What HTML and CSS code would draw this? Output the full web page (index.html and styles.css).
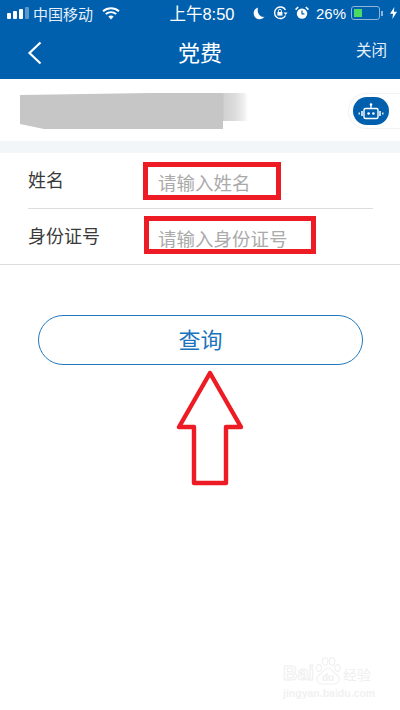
FILE: index.html
```html
<!DOCTYPE html>
<html lang="zh-CN">
<head>
  <meta charset="UTF-8" />
  <meta name="viewport" content="width=device-width, initial-scale=1.0"/>
  <title>党费</title>
  <link rel="stylesheet" href="styles.css">
</head>
<body>

  <div class="phone">

    <!-- Status bar -->
    <div class="status">
      <div class="status-left">
        <div class="signal"><i></i><i></i><i></i><i class="off"></i></div>
        <span class="carrier">中国移动</span>
        <svg class="wifi" width="18" height="13" viewBox="0 0 18 13">
          <path d="M1 4.2 C5.6 0.2 12.4 0.2 17 4.2" fill="none" stroke="#fff" stroke-width="2"/>
          <path d="M3.8 7 C6.9 4.5 11.1 4.5 14.2 7" fill="none" stroke="#fff" stroke-width="2"/>
          <path d="M6.3 9.4 L9 12.6 L11.7 9.4 C10.1 8.2 7.9 8.2 6.3 9.4 Z" fill="#fff"/>
        </svg>
      </div>
      <span class="time">上午8:50</span>
      <div class="status-right">
        <svg width="12" height="13" viewBox="0 0 12 13">
          <path d="M5 0.5 C2 1.5 0.5 4 0.7 6.8 C1 10 3.6 12.3 6.6 12.3 C8.6 12.3 10.3 11.4 11.5 9.8 C7.5 10.6 3.6 6.5 5 0.5 Z" fill="#fff"/>
        </svg>
        <svg class="lock" width="15" height="14" viewBox="0 0 15 14">
          <path d="M12.5 9.5 A5.8 5.8 0 1 1 12.5 4" fill="none" stroke="#fff" stroke-width="1.4"/>
          <path d="M10.6 6.4 L14.6 6.4 L12.6 9 Z" fill="#fff"/>
          <rect x="4.4" y="6" width="5" height="3.6" fill="#fff"/>
          <path d="M5.4 6 V4.8 A1.5 1.5 0 0 1 8.4 4.8 V6" fill="none" stroke="#fff" stroke-width="1"/>
        </svg>
        <svg class="alarm" width="14" height="14" viewBox="0 0 14 14">
          <circle cx="7" cy="7.6" r="5.2" fill="#fff"/>
          <path d="M7 4.6 V7.8 H9.4" fill="none" stroke="#0060ae" stroke-width="1.2"/>
          <path d="M0.6 3.6 L3.2 1 M13.4 3.6 L10.8 1" stroke="#fff" stroke-width="1.6"/>
        </svg>
        <span class="battery-text">26%</span>
        <div class="battery"><div class="battery-level"></div></div>
        <div class="battery-cap"></div>
        <svg class="bolt" width="7" height="12" viewBox="0 0 7 12">
          <path d="M4.4 0 L0 6.8 H3 L2.4 12 L7 4.8 H3.8 Z" fill="#fff"/>
        </svg>
      </div>
    </div>

    <!-- Title bar -->
    <div class="titlebar">
      <svg class="back" width="15" height="24" viewBox="0 0 15 24">
        <path d="M13.5 1.5 L2.5 12 L13.5 22.5" fill="none" stroke="#fff" stroke-width="2.2"/>
      </svg>
      <span class="title">党费</span>
      <span class="close">关闭</span>
    </div>

    <!-- Masked user row -->
    <div class="user-row">
      <div class="mask"></div>
      <div class="robot-pill">
        <div class="robot">
          <svg width="26" height="17" viewBox="0 0 26 17">
            <path d="M13 1 V5" stroke="#fff" stroke-width="1.3"/>
            <circle cx="13" cy="1.6" r="1.3" fill="#fff"/>
            <rect x="6" y="5.5" width="14" height="10" rx="1.5" fill="none" stroke="#fff" stroke-width="1.4"/>
            <circle cx="10.6" cy="10.5" r="1.3" fill="#fff"/>
            <circle cx="15.4" cy="10.5" r="1.3" fill="#fff"/>
            <path d="M4 8 V13 M22 8 V13" stroke="#fff" stroke-width="1.5"/>
            <path d="M1.2 9.5 V11.5 M24.8 9.5 V11.5" stroke="#fff" stroke-width="1.3"/>
          </svg>
        </div>
      </div>
    </div>

    <div class="band"></div>

    <!-- Form -->
    <div class="form">
      <div class="form-row">
        <span class="label">姓名</span>
        <span class="placeholder">请输入姓名</span>
      </div>
      <div class="form-row second">
        <span class="label">身份证号</span>
        <span class="placeholder">请输入身份证号</span>
      </div>
    </div>

    <button class="query">查询</button>

    <!-- Red annotations drawn over the screenshot -->
    <div class="mark mark-name"></div>
    <div class="mark mark-id"></div>
    <svg class="arrow" width="68" height="120" viewBox="0 0 68 120">
      <path d="M34 7 L3 61 H18 V117 H50 V61 H65 Z" fill="none" stroke="#ed1c24" stroke-width="4.4" stroke-linejoin="round"/>
    </svg>

    <div class="watermark">
      <div class="wm-brand">
        <span class="wm-bai">Bai</span>
        <svg class="wm-paw" width="28" height="28" viewBox="0 0 28 28">
          <g fill="#fff" stroke="#f1f1f1" stroke-width="1.2">
            <ellipse cx="5" cy="11" rx="2.6" ry="3.4"/>
            <ellipse cx="11" cy="4.5" rx="2.8" ry="3.8"/>
            <ellipse cx="18" cy="4.5" rx="2.8" ry="3.8"/>
            <ellipse cx="23.5" cy="11" rx="2.6" ry="3.4"/>
            <path d="M14 11 C10 11 9 16 5 18 C1 21 3 27 8 27 H20 C25 27 27 21 23 18 C19 16 18 11 14 11 Z"/>
          </g>
          <text x="14" y="24" text-anchor="middle" class="wm-du">du</text>
        </svg>
        <span class="wm-jy">经验</span>
      </div>
      <div class="wm-url">jingyan.baidu.com</div>
    </div>

  </div>

</body>
</html>
```

FILE: styles.css
```css
* {
  box-sizing: border-box;
  margin: 0;
  padding: 0;
  font-family: 'Liberation Sans', 'Noto Sans CJK SC', sans-serif;
}

body {
  background: #fff;
}

.phone {
  position: relative;
  width: 400px;
  height: 710px;
  overflow: hidden;
  background: #fff;
}

/* Status bar */
.status {
  display: flex;
  align-items: center;
  justify-content: space-between;
  height: 26px;
  padding: 0 3px 0 7px;
  background: #0060ae;
  color: #fff;
}

.status-left,
.status-right {
  display: flex;
  align-items: center;
  width: 150px;
}

.status-right {
  justify-content: flex-end;
}

.signal {
  display: flex;
  align-items: flex-end;
  gap: 2px;
  height: 12px;
  margin-bottom: 1px;
}

.signal i {
  display: block;
  width: 4px;
  background: #fff;
  border-radius: 1px;
}

.signal i:nth-child(1) { height: 6px; }
.signal i:nth-child(2) { height: 8px; }
.signal i:nth-child(3) { height: 10px; }
.signal i:nth-child(4) { height: 12px; }

.signal i.off {
  background: #5d97c9;
}

.carrier {
  margin-left: 4px;
  font-size: 15px;
  color: #e6eff7;
}

.wifi {
  margin-left: 9px;
}

.time {
  font-size: 16.5px;
  white-space: nowrap;
}

.lock {
  margin-left: 8px;
}

.alarm {
  margin-left: 7px;
}

.battery-text {
  margin-left: 7px;
  font-size: 15px;
}

.battery {
  width: 29px;
  height: 14px;
  margin-left: 5px;
  padding: 2px;
  border: 1px solid #8fb6d9;
  border-radius: 3px;
}

.battery-level {
  width: 8px;
  height: 100%;
  background: #4cd964;
}

.battery-cap {
  width: 2px;
  height: 5px;
  margin-left: 1px;
  background: #8fb6d9;
}

.bolt {
  margin-left: 7px;
}

/* Title bar */
.titlebar {
  display: flex;
  align-items: center;
  justify-content: space-between;
  height: 53px;
  padding: 0 13px 0 27px;
  background: #0060ae;
  color: #fff;
}

.title {
  margin: 0 0 4px 2px;
  font-size: 22px;
}

.close {
  margin-bottom: 8px;
  font-size: 15.5px;
  color: #e6eff7;
}

/* Masked user row */
.user-row {
  display: flex;
  align-items: center;
  justify-content: space-between;
  height: 62px;
  padding: 2px 0 0 20px;
}

.mask {
  width: 228px;
  height: 36px;
  background: linear-gradient(90deg, #c6c6c6 0, #c6c6c6 203px, #d2d2d2 204px, #dcdcdc 215px, #f0f0f0 224px, #fff 228px);
  clip-path: polygon(0 2px, 130px 0, 228px 0, 228px 28px, 203px 28px, 203px 36px, 24px 36px, 0 31px);
}

.robot-pill {
  width: 52px;
  height: 36px;
  padding: 3px 0 0 4px;
  border: 1px solid #f1f3f5;
  border-right: none;
  border-radius: 18px 0 0 18px;
}

.robot {
  display: flex;
  align-items: center;
  justify-content: center;
  width: 36px;
  height: 28px;
  background: #0060ae;
  border-radius: 14px;
}

.band {
  height: 12px;
  background: #f2f6f9;
}

/* Form */
.form {
  border-bottom: 1px solid #ddd;
}

.form-row {
  display: flex;
  align-items: center;
  height: 56px;
  margin: 0 27px 0 28px;
  border-bottom: 1px solid #ddd;
}

.form-row.second {
  height: 55px;
  border-bottom: none;
}

.label {
  width: 130px;
  margin-bottom: 3px;
  font-size: 18px;
  color: #3a3a3a;
}

.placeholder {
  margin-top: 2px;
  font-size: 18.5px;
  color: #aaa;
}

.query {
  display: block;
  width: 325px;
  height: 50px;
  margin: 50px 0 0 38px;
  padding-bottom: 5px;
  background: #fff;
  border: 1.5px solid #2277bd;
  border-radius: 25px;
  font-size: 22px;
  color: #1a73bb;
}

/* Red annotations */
.mark {
  position: absolute;
  height: 38px;
  border: 5px solid #ed1c24;
}

.mark-name {
  left: 143px;
  top: 162px;
  width: 138px;
}

.mark-id {
  left: 144px;
  top: 216px;
  width: 172px;
}

.arrow {
  position: absolute;
  left: 176px;
  top: 366px;
}

/* Baidu watermark */
.watermark {
  position: absolute;
  left: 283px;
  top: 657px;
  width: 90px;
  color: #fff;
}

.wm-brand {
  display: flex;
  align-items: flex-end;
  height: 28px;
}

.wm-bai {
  width: 34px;
  font-size: 20px;
  font-weight: bold;
  line-height: 24px;
  -webkit-text-stroke: 1px #efefef;
}

.wm-paw {
  margin-left: -3px;
}

.wm-du {
  font-size: 10px;
  font-weight: bold;
  fill: #efefef;
}

.wm-jy {
  margin-left: 1px;
  font-size: 14px;
  line-height: 20px;
  color: #efefef;
}

.wm-url {
  margin-top: 2px;
  font-size: 10.5px;
  font-weight: bold;
  line-height: 13px;
  color: #f1f1f1;
  white-space: nowrap;
}
```
